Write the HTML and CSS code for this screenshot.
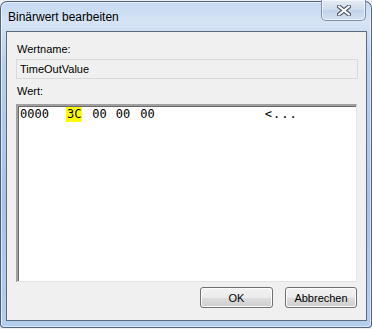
FILE: index.html
```html
<!DOCTYPE html>
<html lang="de">
<head>
    <meta charset="UTF-8">
    <meta name="viewport" content="width=device-width, initial-scale=1.0">
    <title>Binärwert bearbeiten</title>
    <link rel="stylesheet" href="styles.css">
</head>
<body>
<div class="window">

    <div class="titlebar">
        <div class="title">Binärwert bearbeiten</div>
        <div class="close">
            <svg width="14" height="11" viewBox="0 0 14 11">
                <path d="M2 1.5 L12 9.5 M12 1.5 L2 9.5" stroke="#4a5568" stroke-width="4.2" stroke-linecap="round"/>
                <path d="M2 1.5 L12 9.5 M12 1.5 L2 9.5" stroke="#fff" stroke-width="2.2" stroke-linecap="round"/>
            </svg>
        </div>
    </div>

    <div class="client">
        <div class="label first">Wertname:</div>
        <div class="namefield">TimeOutValue</div>

        <div class="label">Wert:</div>
        <div class="hexbox">
            <div class="hexline">
                <span class="offset">0000</span>
                <span class="byte sel">3C</span>
                <span class="byte b2">00</span>
                <span class="byte b3">00</span>
                <span class="byte b4">00</span>
                <span class="ascii">&lt;...</span>
            </div>
        </div>

        <div class="buttons">
            <button class="btn ok">OK</button>
            <button class="btn">Abbrechen</button>
        </div>
    </div>

</div>
</body>
</html>
```

FILE: styles.css
```css
*{
    margin: 0;
    padding: 0;
    box-sizing: border-box;
}
body{
    background: #eef0f3;
    font-family: "Liberation Sans", Arial, sans-serif;
    height: 329px;
    overflow: hidden;
}
.window{
    margin-top: 1px;
    width: 372px;
    height: 327px;
    border: 1px solid rgba(45,60,85,0.75);
    border-radius: 7px 7px 4px 4px;
    padding: 0 4px 5px 5px;
    background: linear-gradient(
        to bottom,
        #c4d9f1 0px,
        #d6e4f5 20px,
        #b8d0ee 60px,
        #a6c3e9 200px,
        #b4ceee 326px
    );
    box-shadow: inset 1px 1px 0 rgba(255,255,255,0.6), inset -1px -1px 0 rgba(255,255,255,0.5);
}
.titlebar{
    height: 29px;
    display: flex;
    justify-content: space-between;
    align-items: flex-start;
}
.title{
    font-size: 12px;
    line-height: 14px;
    color: #000;
    padding: 8px 0 0 2px;
}
.close{
    margin-top: -2px;
    margin-right: 1px;
    width: 45px;
    height: 21px;
    border: 1px solid #8392a8;
    border-top: none;
    border-radius: 0 0 5px 5px;
    background: linear-gradient(to bottom, #e3ebf5, #cfdcec 50%, #c2d3e9 51%, #d4e1f1);
    box-shadow: inset 0 0 0 1px rgba(255,255,255,0.55);
    display: flex;
    justify-content: center;
    align-items: center;
    padding-top: 1px;
}
.client{
    height: 290px;
    background: #f0f0f0;
    border: 1px solid #5d6b7e;
    padding: 0 8px 0 9px;
    display: flex;
    flex-direction: column;
}
.label{
    font-size: 11px;
    line-height: 13px;
    color: #000;
    margin-top: 6px;
    padding-left: 1px;
}
.label.first{
    margin-top: 11px;
}
.namefield{
    margin-top: 3px;
    height: 20px;
    border: 1px solid #d9d9d9;
    background: #f0f0f0;
    font-size: 11px;
    line-height: 18px;
    padding-left: 3px;
    color: #000;
}
.hexbox{
    margin-top: 6px;
    width: 341px;
    height: 178px;
    background: #fff;
    border-top: 2px solid #a0a0a0;
    border-left: 2px solid #a0a0a0;
    border-right: 1px solid #e3e3e3;
    border-bottom: 1px solid #e3e3e3;
    box-shadow: inset 1px 1px 0 #696969;
    padding: 1px 0 0 2px;
}
.hexline{
    font-family: "DejaVu Sans Mono", "Liberation Mono", monospace;
    font-size: 12px;
    line-height: 15px;
    color: #000;
    display: flex;
    white-space: pre;
}
.byte.sel{
    margin-left: 17px;
    padding: 0 1px;
    background: #ffff00;
}
.b2{
    margin-left: 10px;
}
.b3{
    margin-left: 9px;
}
.b4{
    margin-left: 10px;
}
.ascii{
    margin-left: 110px;
    letter-spacing: 1px;
}
.buttons{
    margin-top: 5px;
    display: flex;
    justify-content: flex-end;
    gap: 12px;
    padding-right: 1px;
}
.btn{
    width: 72px;
    height: 21px;
    font-family: "Liberation Sans", Arial, sans-serif;
    font-size: 11px;
    color: #000;
    border: 1px solid #707070;
    border-radius: 3px;
    background: linear-gradient(to bottom, #f2f2f2 0%, #ebebeb 50%, #dddddd 51%, #cfcfcf 100%);
    box-shadow: inset 0 0 0 1px #fcfcfc;
}
.btn.ok{
    width: 73px;
}
```
